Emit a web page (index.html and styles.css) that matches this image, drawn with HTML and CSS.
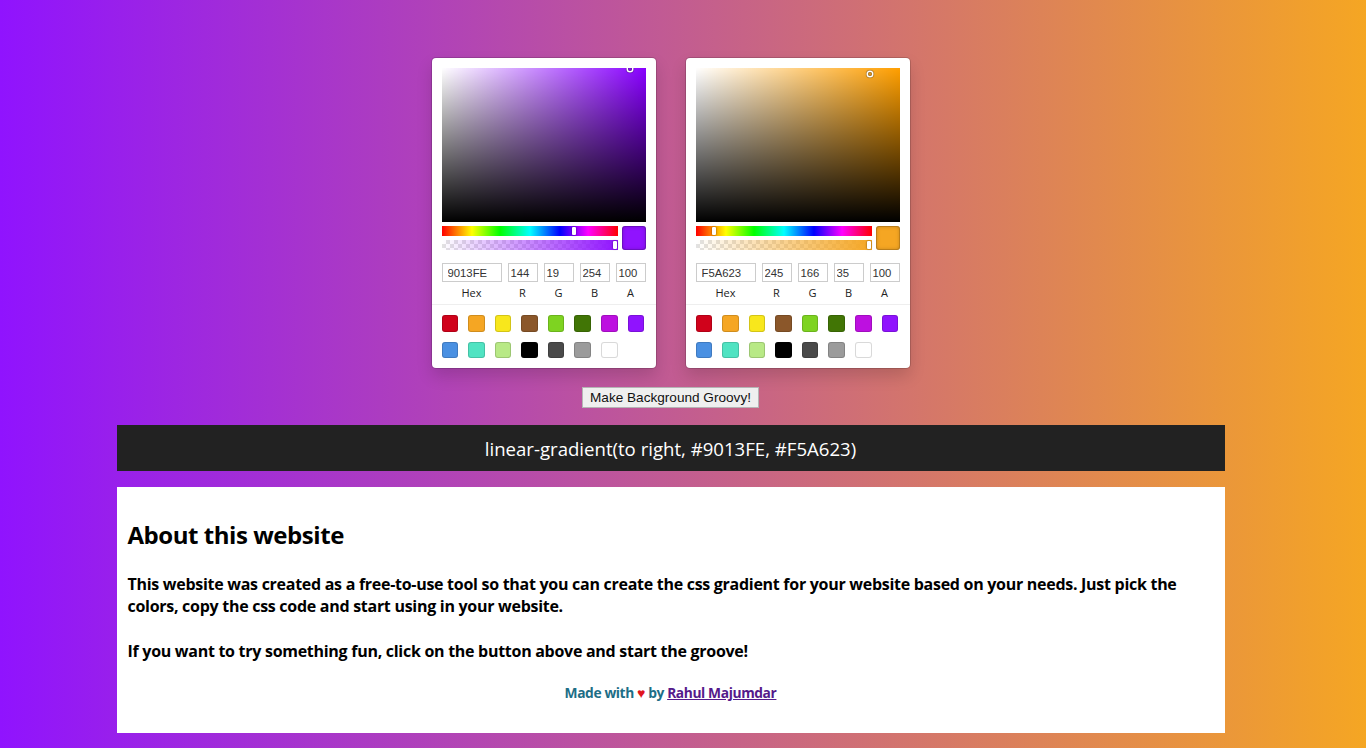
FILE: index.html
```html
<!DOCTYPE html>
<html lang="en">
<head>
<meta charset="utf-8">
<title>CSS Gradient Generator</title>
<link rel="stylesheet" href="styles.css">
</head>
<body>
<div class="page">
  <div class="pickers">
    <div class="sketch">
      <div class="sat sat-purple">
        <span class="sat-pointer" style="left: 92.5%; top: 0.4%;"></span>
      </div>
      <div class="controls">
        <div class="sliders">
          <div class="hue"><span class="hue-pointer" style="left: 75.5%;"></span></div>
          <div class="alpha alpha-purple"><span class="alpha-pointer"></span></div>
        </div>
        <div class="current current-purple"></div>
      </div>
      <div class="fields">
        <div class="field hex"><input class="inp" value="9013FE" readonly><span class="label">Hex</span></div>
        <div class="field"><input class="inp" value="144" readonly><span class="label">R</span></div>
        <div class="field"><input class="inp" value="19" readonly><span class="label">G</span></div>
        <div class="field"><input class="inp" value="254" readonly><span class="label">B</span></div>
        <div class="field"><input class="inp" value="100" readonly><span class="label">A</span></div>
      </div>
      <div class="presets">
        <span class="sw c1"></span><span class="sw c2"></span><span class="sw c3"></span><span class="sw c4"></span>
        <span class="sw c5"></span><span class="sw c6"></span><span class="sw c7"></span><span class="sw c8"></span>
        <span class="sw c9"></span><span class="sw c10"></span><span class="sw c11"></span><span class="sw c12"></span>
        <span class="sw c13"></span><span class="sw c14"></span><span class="sw c15"></span>
      </div>
    </div>

    <div class="sketch">
      <div class="sat sat-orange">
        <span class="sat-pointer" style="left: 85.7%; top: 3.9%;"></span>
      </div>
      <div class="controls">
        <div class="sliders">
          <div class="hue"><span class="hue-pointer" style="left: 10.4%;"></span></div>
          <div class="alpha alpha-orange"><span class="alpha-pointer"></span></div>
        </div>
        <div class="current current-orange"></div>
      </div>
      <div class="fields">
        <div class="field hex"><input class="inp" value="F5A623" readonly><span class="label">Hex</span></div>
        <div class="field"><input class="inp" value="245" readonly><span class="label">R</span></div>
        <div class="field"><input class="inp" value="166" readonly><span class="label">G</span></div>
        <div class="field"><input class="inp" value="35" readonly><span class="label">B</span></div>
        <div class="field"><input class="inp" value="100" readonly><span class="label">A</span></div>
      </div>
      <div class="presets">
        <span class="sw c1"></span><span class="sw c2"></span><span class="sw c3"></span><span class="sw c4"></span>
        <span class="sw c5"></span><span class="sw c6"></span><span class="sw c7"></span><span class="sw c8"></span>
        <span class="sw c9"></span><span class="sw c10"></span><span class="sw c11"></span><span class="sw c12"></span>
        <span class="sw c13"></span><span class="sw c14"></span><span class="sw c15"></span>
      </div>
    </div>
  </div>

  <div class="btn-row">
    <button class="groovy" type="button">Make Background Groovy!</button>
  </div>

  <div class="code-bar">linear-gradient(to right, #9013FE, #F5A623)</div>

  <section class="about">
    <h2 class="about-title">About this website</h2>
    <p class="about-text">This website was created as a free-to-use tool so that you can create the css gradient for your website based on your needs. Just pick the<br>colors, copy the css code and start using in your website.</p>
    <p class="about-text second">If you want to try something fun, click on the button above and start the groove!</p>
    <p class="credit">Made with <span class="heart">&#9829;</span> by <a class="author" href="#">Rahul Majumdar</a></p>
  </section>
</div>
</body>
</html>
```

FILE: styles.css
```css
html {
  background: linear-gradient(to right, #9013FE, #F5A623);
  min-height: 100%;
}

body {
  margin: 0;
  min-height: 748px;
  font-family: "Open Sans", "Lato", sans-serif;
}

.page {
  width: 1341px;
  padding-top: 58px;
}

.pickers {
  display: flex;
  justify-content: center;
  gap: 30px;
}

.sketch {
  width: 204px;
  padding: 10px 10px 0;
  background: #fff;
  border-radius: 4px;
  box-shadow: 0 0 0 1px rgba(0, 0, 0, 0.15), 0 8px 16px rgba(0, 0, 0, 0.15);
}

.sat {
  position: relative;
  height: 154px;
  overflow: hidden;
}

.sat-purple {
  background: linear-gradient(to top, #000, rgba(0, 0, 0, 0)),
              linear-gradient(to right, #fff, rgba(255, 255, 255, 0)),
              #8800ff;
}

.sat-orange {
  background: linear-gradient(to top, #000, rgba(0, 0, 0, 0)),
              linear-gradient(to right, #fff, rgba(255, 255, 255, 0)),
              #ff9f00;
}

.sat-pointer {
  position: absolute;
  width: 4px;
  height: 4px;
  border-radius: 50%;
  transform: translate(-2px, -2px);
  box-shadow: 0 0 0 1.5px #fff, inset 0 0 1px 1px rgba(0, 0, 0, 0.3), 0 0 1px 2px rgba(0, 0, 0, 0.4);
}

.controls {
  display: flex;
  gap: 4px;
  padding: 4px 0;
}

.sliders {
  flex: 1;
}

.hue {
  position: relative;
  height: 10px;
  background: linear-gradient(to right, #f00 0%, #ff0 17%, #0f0 33%, #0ff 50%, #00f 67%, #f0f 83%, #f00 100%);
}

.hue-pointer,
.alpha-pointer {
  position: absolute;
  top: 1px;
  width: 4px;
  height: 8px;
  background: #fff;
  border-radius: 1px;
  box-shadow: 0 0 2px rgba(0, 0, 0, 0.6);
  transform: translateX(-2px);
}

.alpha-pointer {
  left: calc(100% - 3px);
}

.alpha {
  position: relative;
  height: 10px;
  margin-top: 4px;
  background-size: 100% 100%, 8px 8px;
}

.alpha-purple {
  background-image: linear-gradient(to right, rgba(144, 19, 254, 0), #9013FE),
                    conic-gradient(#e2e2e2 25%, #fff 0 50%, #e2e2e2 0 75%, #fff 0);
}

.alpha-orange {
  background-image: linear-gradient(to right, rgba(245, 166, 35, 0), #F5A623),
                    conic-gradient(#e2e2e2 25%, #fff 0 50%, #e2e2e2 0 75%, #fff 0);
}

.current {
  width: 24px;
  height: 24px;
  border-radius: 3px;
  box-shadow: inset 0 0 0 1px rgba(0, 0, 0, 0.15), inset 0 0 4px rgba(0, 0, 0, 0.25);
}

.current-purple { background: #9013FE; }
.current-orange { background: #F5A623; }

.fields {
  display: flex;
  padding-top: 9px;
}

.field {
  flex: 1;
  padding-left: 6px;
  display: flex;
  flex-direction: column;
}

.field.hex {
  flex: 2;
  padding-left: 0;
}

.inp {
  box-sizing: border-box;
  width: 100%;
  height: 19px;
  margin: 0;
  padding: 0 0 0 10%;
  border: none;
  outline: none;
  box-shadow: inset 0 0 0 1px #ccc;
  font-family: "Liberation Sans", Arial, sans-serif;
  font-size: 11.3px;
  color: #333;
  background: #fff;
}

.label {
  display: block;
  text-align: center;
  font-family: "Open Sans", "Lato", sans-serif;
  font-size: 11px;
  line-height: 14px;
  color: #222;
  padding: 4px 0;
}

.presets {
  display: flex;
  flex-wrap: wrap;
  margin: 0 -10px;
  padding: 10px 0 0 10px;
  border-top: 1px solid #eee;
}

.sw {
  width: 16.5px;
  height: 16.5px;
  margin: 0 10.1px 10px 0;
  border-radius: 3px;
  box-shadow: inset 0 0 0 1px rgba(0, 0, 0, 0.15);
}

.c1 { background: #D0021B; }
.c2 { background: #F5A623; }
.c3 { background: #F8E71C; }
.c4 { background: #8B572A; }
.c5 { background: #7ED321; }
.c6 { background: #417505; }
.c7 { background: #BD10E0; }
.c8 { background: #9013FE; }
.c9 { background: #4A90E2; }
.c10 { background: #50E3C2; }
.c11 { background: #B8E986; }
.c12 { background: #000000; }
.c13 { background: #4A4A4A; }
.c14 { background: #9B9B9B; }
.c15 { background: #FFFFFF; }

.btn-row {
  display: flex;
  justify-content: center;
  margin-top: 19px;
}

.groovy {
  height: 21px;
  margin: 0;
  padding: 0 7px;
  font-family: "Liberation Sans", Arial, sans-serif;
  font-size: 13.6px;
  color: #111;
  background: #efefef;
  border: 1px solid #b5b5b5;
  border-radius: 0;
}

.code-bar {
  width: 1108px;
  height: 46px;
  margin: 17px auto 0;
  display: flex;
  align-items: center;
  justify-content: center;
  background: #222;
  color: #fff;
  font-family: "Open Sans", "Lato", sans-serif;
  font-size: 18.6px;
}

.about {
  width: 1108px;
  box-sizing: border-box;
  margin: 16px auto 0;
  padding: 32px 11px 30px;
  background: #fff;
  color: #000;
}

.about-title {
  margin: 0;
  font-size: 24px;
  line-height: 32px;
  font-weight: 700;
  letter-spacing: -0.45px;
}

.about-text {
  margin: 22px 0 0;
  font-size: 16px;
  line-height: 22px;
  font-weight: 700;
  letter-spacing: -0.28px;
}

.about-text.second {
  margin-top: 23px;
}

.credit {
  margin: 21px 0 0;
  text-align: center;
  font-size: 13.8px;
  line-height: 20px;
  font-weight: 700;
  letter-spacing: -0.4px;
  color: #1d6e86;
}

.heart {
  color: #e0141e;
  font-size: 14px;
}

.author {
  color: #551a8b;
  text-decoration: underline;
}
```
